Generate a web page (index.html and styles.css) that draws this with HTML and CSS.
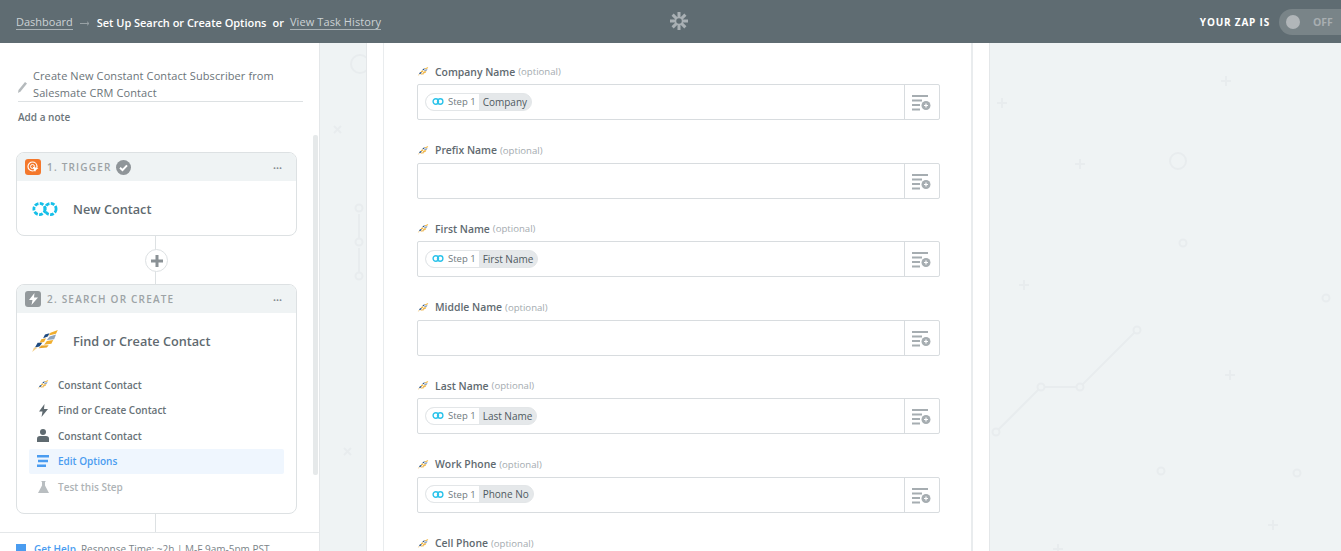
FILE: index.html
```html
<!DOCTYPE html>
<html lang="en">
<head>
    <meta charset="UTF-8">
    <title>Set Up Search or Create Options</title>
    <link rel="stylesheet" href="styles.css">
</head>
<body>
    <svg width="0" height="0" class="defs">
        <defs>
            <symbol id="cc" viewBox="0 0 30 24">
                <polygon points="21,3 29,0 27,4 19,6" fill="#f0ae2e"/>
                <polygon points="15,5 20,3.500 18,7 13,9" fill="#1f4a80"/>
                <polygon points="20,7 27,5 25,10 17,11" fill="#8ea4bd"/>
                <polygon points="11,10 16,9 14,13 9,14" fill="#f0ae2e"/>
                <polygon points="17,12 24,11 22,15 14,16" fill="#f0ae2e"/>
                <polygon points="7,14 12,14 9,18 4,19" fill="#1f4a80"/>
                <polygon points="11,17 19,16.500 17,19 8,20" fill="#e9a52a"/>
                <polygon points="3,19 7,19 1,24" fill="#f4cf8a"/>
            </symbol>
            <symbol id="sm" viewBox="0 0 28 14">
                <g fill="none" stroke="#16bfe8" stroke-width="2.800" stroke-dasharray="3.800 1.400">
                    <circle cx="8.500" cy="7" r="5.600"/>
                    <circle cx="19.500" cy="7" r="5.600"/>
                </g>
            </symbol>
            <symbol id="sm-small" viewBox="0 0 12 7">
                <g fill="none" stroke="#2cc3ea" stroke-width="1.400">
                    <circle cx="3.800" cy="3.500" r="2.700"/>
                    <circle cx="8.200" cy="3.500" r="2.700"/>
                </g>
            </symbol>
            <symbol id="addfield" viewBox="0 0 20 16">
                <g fill="#a6adb1">
                    <rect x="0" y="0" width="16" height="2"/>
                    <rect x="0" y="4.500" width="10" height="2"/>
                    <rect x="0" y="9" width="8" height="2"/>
                    <rect x="0" y="13.500" width="8" height="2"/>
                    <circle cx="14" cy="10.500" r="4.500"/>
                </g>
                <path d="M12 10.500h4M14 8.500v4" stroke="#fff" stroke-width="1.200"/>
            </symbol>
        </defs>
    </svg>

    <header class="topbar">
        <div class="crumbs">
            <a class="crumb-link">Dashboard</a>
            <svg class="crumb-arrow" width="10" height="5" viewBox="0 0 10 5"><path d="M0 2.500h9M7 .7l2 1.800-2 1.800" fill="none" stroke="#98a1a5"/></svg>
            <strong>Set Up Search or Create Options</strong>
            <span class="crumb-or">or</span>
            <a class="crumb-link">View Task History</a>
        </div>
        <svg class="gear" width="18" height="18" viewBox="0 0 18 18">
            <g stroke="#a9b0b4" stroke-width="3">
                <path d="M9 0v18M0 9h18M2.600 2.600l12.800 12.800M15.400 2.600L2.600 15.400"/>
            </g>
            <circle cx="9" cy="9" r="3.500" fill="#5f6c72" stroke="#a9b0b4" stroke-width="1.500"/>
        </svg>
        <div class="zap-status">
            <span class="zap-label">YOUR ZAP IS</span>
            <div class="toggle"><span class="knob"></span><span class="toggle-text">OFF</span></div>
        </div>
    </header>

    <div class="main">
        <aside class="sidebar">
            <div class="zap-title">
                <svg class="pencil" width="9" height="11" viewBox="0 0 9 11"><path d="M7 0l2 1.500L2.500 9.500 0 11l.5-3z" fill="#b5babd"/></svg>
                <p>Create New Constant Contact Subscriber from Salesmate CRM Contact</p>
            </div>
            <div class="add-note">Add a note</div>

            <section class="step step-trigger">
                <div class="step-head">
                    <span class="step-badge badge-orange">
                        <svg width="12" height="12" viewBox="0 0 12 12"><circle cx="5.500" cy="5.500" r="4.500" fill="none" stroke="#fff" stroke-width="1.200"/><circle cx="5.500" cy="5.500" r="2" fill="none" stroke="#fff"/><path d="M5.500 5.500l6 2-2.500 1 -1 2.500z" fill="#fff"/></svg>
                    </span>
                    <span class="step-name">1. TRIGGER</span>
                    <svg class="check" width="15" height="15" viewBox="0 0 15 15"><circle cx="7.500" cy="7.500" r="7.500" fill="#8f9599"/><path d="M4 7.800l2.500 2.400L11 5.400" fill="none" stroke="#fff" stroke-width="2"/></svg>
                    <span class="dots">•••</span>
                </div>
                <div class="step-app">
                    <svg class="app-logo" width="28" height="14"><use href="#sm"/></svg>
                    <span>New Contact</span>
                </div>
            </section>

            <div class="connector">
                <span class="plus-btn">
                    <svg width="12" height="12" viewBox="0 0 12 12"><path d="M6 0v12M0 6h12" stroke="#8a9195" stroke-width="3"/></svg>
                </span>
            </div>

            <section class="step step-action">
                <div class="step-head">
                    <span class="step-badge badge-grey">
                        <svg width="9" height="12" viewBox="0 0 9 12"><path d="M5.500 0L0 7h3.500L2.500 12 9 4.500H5z" fill="#fff"/></svg>
                    </span>
                    <span class="step-name">2. SEARCH OR CREATE</span>
                    <span class="dots">•••</span>
                </div>
                <div class="step-app app-action">
                    <svg class="app-logo" width="28" height="22"><use href="#cc"/></svg>
                    <span>Find or Create Contact</span>
                </div>
                <ul class="substeps">
                    <li class="substep">
                        <span class="sub-icon"><svg width="12" height="9"><use href="#cc"/></svg></span>
                        Constant Contact
                    </li>
                    <li class="substep">
                        <span class="sub-icon"><svg width="9" height="13" viewBox="0 0 9 13"><path d="M5.500 0L0 7.500h3.500L2.500 13 9 5H5z" fill="#5f6a70"/></svg></span>
                        Find or Create Contact
                    </li>
                    <li class="substep">
                        <span class="sub-icon"><svg width="12" height="13" viewBox="0 0 12 13"><circle cx="6" cy="3" r="3" fill="#5f6a70"/><path d="M0 13V9.500Q0 7 3 7h6q3 0 3 2.500V13z" fill="#5f6a70"/></svg></span>
                        Constant Contact
                    </li>
                    <li class="substep substep-active">
                        <span class="sub-icon"><svg width="12" height="12" viewBox="0 0 12 12"><path d="M0 0h12v2.500H0zM1 4.700h10v2.500H1zM0 9.500h9V12H0z" fill="#4a9cf0"/></svg></span>
                        Edit Options
                    </li>
                    <li class="substep substep-off">
                        <span class="sub-icon"><svg width="11" height="12" viewBox="0 0 11 12"><path d="M3.500 0h4v1H7v3.500L11 12H0l4-7.500V1h-.5z" fill="#b9bec1"/></svg></span>
                        Test this Step
                    </li>
                </ul>
            </section>

            <div class="connector connector-end"></div>
            <div class="help-bar">
                <span class="help-icon"></span>
                <a class="help-link">Get Help</a>
                <span>Response Time: ~2h | M-F 9am-5pm PST</span>
            </div>
            <div class="side-scroll"></div>
        </aside>

        <div class="canvas">
            <svg class="bg-art bg-left" width="47" height="508" fill="none" stroke="#e8ecee">
                <circle cx="40" cy="21" r="9" stroke-width="2"/>
                <path d="M14 83l7 7M21 83l-7 7M24 405l7 7M31 405l-7 7" stroke-width="2"/>
                <path d="M39 171v24M39 205v24" stroke-width="2"/>
                <circle cx="39" cy="165" r="3.500" stroke-width="2"/>
                <circle cx="39" cy="199" r="3.500" stroke-width="2"/>
                <circle cx="39" cy="233" r="3.500" stroke-width="2"/>
            </svg>
            <svg class="bg-art bg-right" width="351" height="508" fill="none" stroke="#e8ecee" stroke-width="2">
                <path d="M7 60h10M12 55v10M231 38h10M236 33v10M85 121h10M90 116v10M29 242h10M34 237v10M235 332h10M240 327v10M278 482h10M283 477v10M63 506h10M68 501v7"/>
                <circle cx="188" cy="118" r="8"/>
                <circle cx="193" cy="200" r="3.500"/>
                <circle cx="336" cy="255" r="3.500"/>
                <circle cx="171" cy="428" r="3.500"/>
                <circle cx="307" cy="430" r="3.500"/>
                <path d="M6 389L51 344H90L147 287"/>
                <circle cx="6" cy="389" r="3.500" fill="#eff3f4"/>
                <circle cx="51" cy="344" r="3.500" fill="#eff3f4"/>
                <circle cx="90" cy="344" r="3.500" fill="#eff3f4"/>
                <circle cx="147" cy="287" r="3.500" fill="#eff3f4"/>
            </svg>

            <div class="column">
                <div class="panel">
                    <div class="field">
                        <div class="field-label"><svg width="12" height="9"><use href="#cc"/></svg><b>Company Name</b> <i>(optional)</i></div>
                        <div class="field-box">
                            <div class="field-input"><span class="pill"><span class="pill-step"><svg width="12" height="7"><use href="#sm-small"/></svg>Step 1</span><span class="pill-value">Company</span></span></div>
                            <span class="field-btn"><svg width="20" height="16"><use href="#addfield"/></svg></span>
                        </div>
                    </div>
                    <div class="field">
                        <div class="field-label"><svg width="12" height="9"><use href="#cc"/></svg><b>Prefix Name</b> <i>(optional)</i></div>
                        <div class="field-box">
                            <div class="field-input"></div>
                            <span class="field-btn"><svg width="20" height="16"><use href="#addfield"/></svg></span>
                        </div>
                    </div>
                    <div class="field">
                        <div class="field-label"><svg width="12" height="9"><use href="#cc"/></svg><b>First Name</b> <i>(optional)</i></div>
                        <div class="field-box">
                            <div class="field-input"><span class="pill"><span class="pill-step"><svg width="12" height="7"><use href="#sm-small"/></svg>Step 1</span><span class="pill-value">First Name</span></span></div>
                            <span class="field-btn"><svg width="20" height="16"><use href="#addfield"/></svg></span>
                        </div>
                    </div>
                    <div class="field">
                        <div class="field-label"><svg width="12" height="9"><use href="#cc"/></svg><b>Middle Name</b> <i>(optional)</i></div>
                        <div class="field-box">
                            <div class="field-input"></div>
                            <span class="field-btn"><svg width="20" height="16"><use href="#addfield"/></svg></span>
                        </div>
                    </div>
                    <div class="field">
                        <div class="field-label"><svg width="12" height="9"><use href="#cc"/></svg><b>Last Name</b> <i>(optional)</i></div>
                        <div class="field-box">
                            <div class="field-input"><span class="pill"><span class="pill-step"><svg width="12" height="7"><use href="#sm-small"/></svg>Step 1</span><span class="pill-value">Last Name</span></span></div>
                            <span class="field-btn"><svg width="20" height="16"><use href="#addfield"/></svg></span>
                        </div>
                    </div>
                    <div class="field">
                        <div class="field-label"><svg width="12" height="9"><use href="#cc"/></svg><b>Work Phone</b> <i>(optional)</i></div>
                        <div class="field-box">
                            <div class="field-input"><span class="pill"><span class="pill-step"><svg width="12" height="7"><use href="#sm-small"/></svg>Step 1</span><span class="pill-value">Phone No</span></span></div>
                            <span class="field-btn"><svg width="20" height="16"><use href="#addfield"/></svg></span>
                        </div>
                    </div>
                    <div class="field">
                        <div class="field-label"><svg width="12" height="9"><use href="#cc"/></svg><b>Cell Phone</b> <i>(optional)</i></div>
                    </div>
                </div>
            </div>
        </div>
    </div>
</body>
</html>
```

FILE: styles.css
```css
/* base */
html, body {
    margin: 0;
    padding: 0;
    height: 551px;
    overflow: hidden;
}
body {
    font-family: "Open Sans", "Liberation Sans", sans-serif;
    color: #5f6a70;
    background-color: #eff3f4;
}
.defs {
    position: absolute;
}

/* top bar */
.topbar {
    height: 43px;
    background-color: #5f6c72;
    display: flex;
    align-items: center;
    justify-content: space-between;
    position: relative;
    padding-left: 16px;
    font-size: 11px;
    color: #fff;
    box-sizing: border-box;
}
.crumbs {
    display: flex;
    align-items: center;
    margin-top: 1px;
}
.crumb-link {
    color: #ccd2d5;
    border-bottom: 1px solid #aab2b6;
    line-height: 14px;
}
.crumb-arrow {
    margin: 2px 7px 0 7px;
}
.crumbs strong {
    font-weight: 600;
    letter-spacing: -0.03px;
}
.crumb-or {
    margin: 0 6px;
    font-weight: 600;
}
.crumbs .crumb-link:last-child {
    letter-spacing: 0.1px;
}
.gear {
    position: absolute;
    left: 670px;
    top: 12px;
}
.zap-status {
    display: flex;
    align-items: center;
}
.zap-label {
    font-size: 10px;
    font-weight: 700;
    letter-spacing: 0.8px;
    margin-right: 9px;
}
.toggle {
    width: 62px;
    height: 26px;
    border-radius: 13px 0 0 13px;
    background-color: #798488;
    display: flex;
    align-items: center;
    box-sizing: border-box;
    padding-left: 7px;
}
.knob {
    width: 14px;
    height: 14px;
    border-radius: 50%;
    background-color: #b1b6b9;
}
.toggle-text {
    margin-left: 13px;
    font-size: 10.5px;
    font-weight: 700;
    color: #a8aeb1;
}

/* layout */
.main {
    display: flex;
    height: 508px;
}

/* sidebar */
.sidebar {
    width: 320px;
    flex-shrink: 0;
    background-color: #fff;
    position: relative;
    overflow: hidden;
    box-sizing: border-box;
    padding-top: 23px;
    border-right: 1px solid #e4e7e9;
}
.zap-title {
    margin: 0 16px 0 18px;
    border-bottom: 1px solid #dde1e3;
    display: flex;
    align-items: center;
    height: 35px;
}
.pencil {
    flex-shrink: 0;
    margin: 7px 6px 0 0;
}
.zap-title p {
    margin: 0;
    font-size: 11px;
    line-height: 17px;
    letter-spacing: 0.1px;
    color: #6b7479;
}
.add-note {
    margin: 8px 0 0 18px;
    font-size: 10px;
    line-height: 15px;
    font-weight: 600;
    color: #6b7479;
}
.step {
    width: 281px;
    margin-left: 16px;
    box-sizing: border-box;
    border: 1px solid #dde1e3;
    border-radius: 8px;
    background-color: #fff;
    overflow: hidden;
}
.step-trigger {
    margin-top: 27px;
    height: 84px;
}
.step-action {
    height: 230px;
}
.step-head {
    height: 28px;
    background-color: #eff3f4;
    display: flex;
    align-items: center;
    padding: 0 14px 0 8px;
}
.step-badge {
    width: 16px;
    height: 16px;
    border-radius: 3px;
    display: flex;
    align-items: center;
    justify-content: center;
    margin-right: 6px;
}
.badge-orange {
    background-color: #f4782c;
}
.badge-grey {
    background-color: #93999c;
}
.step-name {
    font-size: 10px;
    font-weight: 600;
    letter-spacing: 1.2px;
    color: #9da3a6;
}
.check {
    margin-left: 4px;
}
.dots {
    margin-left: auto;
    font-size: 8px;
    color: #868d91;
}
.step-app {
    display: flex;
    align-items: center;
    height: 56px;
    padding-left: 14px;
    font-size: 12.7px;
    font-weight: 600;
    color: #5f6a70;
}
.step-app .app-logo {
    margin-right: 14px;
}
.substeps {
    list-style: none;
    margin: 3px 0 0;
    padding: 0;
}
.substep {
    height: 25.5px;
    margin: 0 12px;
    padding-left: 8px;
    display: flex;
    align-items: center;
    font-size: 10px;
    font-weight: 600;
    color: #687277;
    border-radius: 2px;
}
.sub-icon {
    width: 12px;
    display: flex;
    justify-content: center;
    margin-right: 9px;
}
.substep-active {
    background-color: #eff6fe;
    color: #4a9cf0;
}
.substep-off {
    color: #aeb3b6;
}
.connector {
    height: 48px;
    position: relative;
}
.connector::before {
    content: "";
    position: absolute;
    left: 155px;
    top: 0;
    bottom: 0;
    width: 1px;
    background-color: #dde1e3;
}
.connector-end {
    height: 18px;
}
.plus-btn {
    position: absolute;
    left: 145px;
    top: 13px;
    width: 21px;
    height: 21px;
    border: 1px solid #dde1e3;
    border-radius: 50%;
    background-color: #fff;
    display: flex;
    align-items: center;
    justify-content: center;
}
.help-bar {
    border-top: 1px solid #e4e7e9;
    padding: 9px 0 0 16px;
    display: flex;
    align-items: center;
    font-size: 10px;
    line-height: 14px;
    color: #7b8489;
    white-space: nowrap;
}
.help-icon {
    width: 10px;
    height: 10px;
    background-color: #4a9cf0;
    margin-right: 8px;
}
.help-link {
    color: #4a9cf0;
    font-weight: 600;
    margin-right: 5px;
}
.side-scroll {
    position: absolute;
    left: 313px;
    top: 92px;
    width: 5px;
    height: 340px;
    background-color: #e6e9ea;
    border-radius: 2px;
}

/* canvas + form */
.canvas {
    flex: 1;
    position: relative;
    overflow: hidden;
    min-width: 0;
}
.bg-art {
    position: absolute;
    top: 0;
}
.bg-left {
    left: 0;
}
.bg-right {
    right: 0;
}
.column {
    position: relative;
    margin-left: 46px;
    width: 624px;
    height: 508px;
    box-sizing: border-box;
    background-color: #fff;
    border-left: 1px solid #e4e7e9;
    border-right: 1px solid #e4e7e9;
    padding-left: 16px;
    overflow: hidden;
}
.panel {
    width: 590px;
    height: 508px;
    box-sizing: border-box;
    border-left: 1px solid #e9ecee;
    border-right: 2px solid #e9ecee;
    padding: 17px 31px 0 33px;
}
.field {
    height: 78.6px;
}
.field-label {
    height: 24px;
    display: flex;
    align-items: center;
    font-size: 10.4px;
    color: #a4abaf;
    padding-bottom: 1px;
    box-sizing: border-box;
}
.field-label svg {
    margin-right: 6px;
}
.field-label b {
    font-weight: 600;
    color: #5f6a70;
    margin-right: 3px;
}
.field-label i {
    font-style: normal;
    font-size: 9.6px;
}
.field-box {
    height: 36px;
    box-sizing: border-box;
    border: 1px solid #d8dcdf;
    border-radius: 2px;
    display: flex;
    align-items: center;
}
.field-input {
    flex: 1;
    padding-left: 7px;
    padding-bottom: 1px;
    display: flex;
    align-items: center;
}
.field-btn {
    width: 35px;
    height: 100%;
    border-left: 1px solid #d8dcdf;
    display: flex;
    align-items: center;
    justify-content: center;
    padding-top: 2px;
    box-sizing: border-box;
}
.pill {
    display: flex;
    height: 18px;
    align-items: stretch;
    box-sizing: border-box;
    border: 1px solid #e3e6e8;
    border-radius: 9px;
    background-color: #e5e8ea;
    font-size: 9.5px;
    overflow: hidden;
}
.pill-step {
    display: flex;
    align-items: center;
    gap: 4px;
    background-color: #fff;
    color: #6f797e;
    padding: 0 3px 0 6px;
    border-radius: 9px 0 0 9px;
}
.pill-value {
    display: flex;
    align-items: center;
    color: #4f595f;
    padding: 0 4px;
    font-size: 10px;
}
```
